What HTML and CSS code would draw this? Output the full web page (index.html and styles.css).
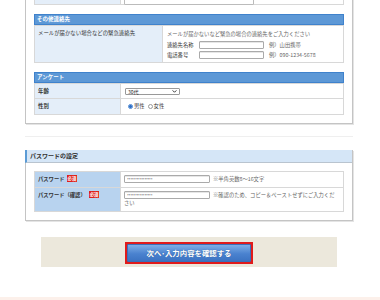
FILE: index.html
```html
<!DOCTYPE html>
<html lang="ja">
<head>
<meta charset="utf-8">
<link rel="stylesheet" href="styles.css">
</head>
<body>
<div class="panel panel-top">
  <div class="tbl prev">
    <div class="row prev-row">
      <div class="lab lab-narrow"></div>
      <div class="val"><span class="prev-input"></span></div>
    </div>
  </div>

  <div class="sec-head">その他連絡先</div>
  <div class="tbl">
    <div class="row row-contact">
      <div class="lab lab-wide">メールが届かない場合などの緊急連絡先</div>
      <div class="val val-contact">
        <div class="desc">メールが届かないなど緊急の場合の連絡先をご入力ください</div>
        <div class="field"><span class="fname">連絡先名称</span><span class="inp"></span><span class="ex">例）山田携帯</span></div>
        <div class="field"><span class="fname">電話番号</span><span class="inp"></span><span class="ex">例）090-1234-5678</span></div>
      </div>
    </div>
  </div>

  <div class="sec-head">アンケート</div>
  <div class="tbl">
    <div class="row row-age">
      <div class="lab lab-narrow">年齢</div>
      <div class="val"><span class="sel">30代<svg class="chev" viewBox="0 0 6 4" width="5" height="3"><path d="M0.5 0.5 L3 3 L5.5 0.5" fill="none" stroke="#222" stroke-width="1.2"/></svg></span></div>
    </div>
    <div class="row row-sex">
      <div class="lab lab-narrow">性別</div>
      <div class="val"><span class="radio on"></span><span class="rl">男性</span><span class="radio"></span><span class="rl">女性</span></div>
    </div>
  </div>
</div>

<div class="faint"></div>

<div class="panel panel-pw">
  <div class="pw-head">パスワードの設定</div>
  <div class="pw-body">
    <div class="tbl">
      <div class="row row-pw1">
        <div class="lab pw-lab">パスワード<span class="req">必須</span></div>
        <div class="val pw-val"><span class="pinp">••••••••••••••••</span><span class="note">※半角英数8～16文字</span></div>
      </div>
      <div class="row row-pw2">
        <div class="lab pw-lab">パスワード（確認）<span class="req req2">必須</span></div>
        <div class="val pw-val"><span class="pinp">••••••••••••••••</span><span class="note">※確認のため、コピー＆ペーストせずにご入力ください</span></div>
      </div>
    </div>
  </div>
</div>

<div class="btn-area">
  <div class="btn-frame"><div class="btn">次へ･入力内容を確認する</div></div>
</div>

<div class="bottom-line"></div>
</body>
</html>
```

FILE: styles.css
```css
* { box-sizing: border-box; }
html, body { margin: 0; padding: 0; background: #fff; }
body {
  font-family: "Noto Sans CJK JP", "Noto Sans", sans-serif;
  color: #333;
  width: 380px;
  height: 300px;
  overflow: hidden;
  position: relative;
}

.panel {
  margin-left: 25px;
  width: 328px;
  border: 1px solid #c4c4c4;
  background: #fff;
  box-shadow: 1px 1px 0 #e4e4e4;
}
.panel-top {
  margin-top: -20px;
  padding: 0 8px 8px;
}

.tbl {
  border: 1px solid #d8d8d8;
  border-bottom: none;
}
.prev { border-top: none; }
.row {
  display: flex;
  border-bottom: 1px solid #d8d8d8;
}
.prev-row { height: 24px; }
.lab {
  background: #e4eef9;
  border-right: 1px solid #d8d8d8;
  font-size: 5.4px;
  line-height: 7px;
  padding: 3px 3px;
  flex: none;
  white-space: nowrap;
}
.lab-narrow { width: 86px; }
.lab-wide { width: 128px; padding-top: 4px; }
.val { flex: 1; min-width: 0; padding: 3px 3px; font-size: 5.3px; line-height: 7px; color: #555; }
.prev-input {
  display: block;
  margin-top: 13px;
  width: 130px;
  height: 8px;
  border: 1px solid #bbb;
  border-radius: 1px;
}

.sec-head {
  margin-top: 9px;
  height: 11px;
  background: #5d98d6;
  border: 1px solid #3f82cc;
  color: #fff;
  font-weight: bold;
  font-size: 5.5px;
  line-height: 9px;
  padding-left: 2px;
}

.row-contact { height: 37px; }
.val-contact { padding: 5px 4px 0; }
.desc { line-height: 7px; color: #666; }
.field { display: flex; align-items: center; margin-top: 3px; height: 8px; color: #333; }
.field + .field { margin-top: 2px; }
.fname { width: 32px; flex: none; }
.inp {
  width: 65px;
  height: 8px;
  border: 1px solid #aaa;
  border-radius: 1px;
  box-shadow: inset 0 1px 0 #e6e6e6;
  flex: none;
}
.ex { margin-left: 5px; color: #666; }

.row-age { height: 15px; }
.row-sex { height: 16px; }
.row-age .lab, .row-sex .lab { padding-top: 4px; font-weight: bold; }
.row-age .val { padding: 4px 4px 0; }
.sel {
  display: flex;
  align-items: center;
  justify-content: space-between;
  width: 55px;
  height: 7px;
  border: 1px solid #999;
  border-radius: 1px;
  font-size: 5px;
  line-height: 5px;
  color: #222;
  padding: 0 2px 0 2px;
  background: #fff;
}
.chev { display: block; }
.row-sex .val { display: flex; align-items: center; padding: 0 4px 0 7px; color: #333; }
.radio {
  width: 5px; height: 5px;
  border-radius: 50%;
  border: 1px solid #999;
  background: #fff;
  flex: none;
}
.radio.on {
  border-color: #4a86d0;
  background: radial-gradient(circle, #2f6fc8 0 1.3px, #fff 1.6px);
}
.rl { margin-left: 1px; margin-right: 3px; }

.faint {
  margin: 12px 0 0 25px;
  width: 328px;
  height: 1px;
  background: #efefef;
}

.panel-pw {
  margin-top: 13px;
  border-top: none;
}
.pw-head {
  height: 13px;
  background: #d5e6f7;
  border-left: 2px solid #5b9bd5;
  border-bottom: 1px solid #b9c4cf;
  margin-left: -1px;
  font-size: 6px;
  font-weight: bold;
  line-height: 12px;
  padding-left: 3px;
  color: #333;
}
.pw-body { padding: 8px 8px 8px; }
.row-pw1 { height: 16px; }
.row-pw2 { height: 24px; }
.pw-lab {
  width: 86px;
  background: #b8d3ef;
  font-weight: bold;
  font-size: 5.3px;
  padding: 4px 3px 0;
  display: flex;
  align-items: flex-start;
}
.req {
  display: inline-block;
  background: #dd1f1a;
  color: #fff;
  font-size: 4.4px;
  line-height: 7px;
  height: 7px;
  padding: 0 1px;
  margin-left: 2px;
  margin-top: -1px;
}
.req2 { margin-left: 3px; }
.pw-val { padding: 3px 7px 0 3px; font-size: 5.3px; line-height: 8px; color: #666; }
.pinp {
  display: inline-block;
  vertical-align: top;
  width: 86px;
  height: 8px;
  border: 1px solid #aaa;
  border-radius: 1px;
  box-shadow: inset 0 1px 0 #e6e6e6;
  font-family: "DejaVu Sans", sans-serif;
  font-size: 3.2px;
  line-height: 6px;
  letter-spacing: -0.3px;
  color: #333;
  padding-left: 2px;
  overflow: hidden;
  white-space: nowrap;
  margin-right: 3px;
}
.note { color: #666; }

.btn-area {
  margin: 16px 0 0 41px;
  width: 296px;
  height: 30px;
  background: #ece8dc;
  padding-top: 5px;
  display: flex;
  justify-content: center;
}
.btn-frame {
  width: 128px;
  height: 22px;
  background: #e01b1b;
  padding: 2px;
}
.btn {
  height: 18px;
  border: 1px solid #3a6fb8;
  border-radius: 1px;
  background: linear-gradient(#7eaee6, #4a82cf 55%, #3c73c2);
  color: #fff;
  font-weight: bold;
  font-size: 7.4px;
  line-height: 16px;
  text-align: center;
  text-shadow: 0 0 1px #2a558f;
}

.bottom-line {
  position: absolute;
  left: 0; right: 0;
  top: 297px;
  height: 3px;
  background: #fcf0ea;
}
```
